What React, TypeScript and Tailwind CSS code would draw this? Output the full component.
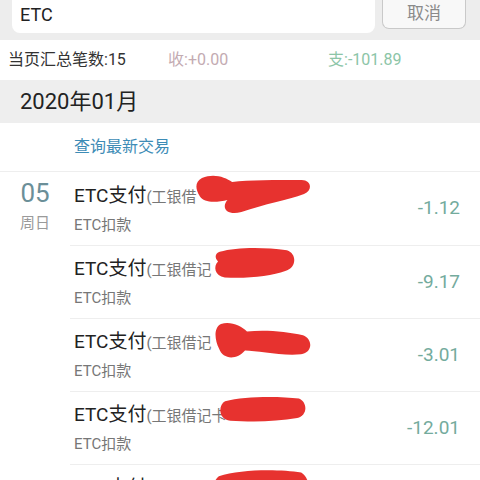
import type { ReactNode } from "react";

const FONT = { fontFamily: '"Roboto", "Noto Sans CJK SC", sans-serif' };

type Txn = { detail: string; amount: string; scribble: ReactNode };

const Scribble = ({ d, className }: { d: string; className: string }) => (
  <svg className={`pointer-events-none absolute ${className}`} viewBox="0 0 100 40" preserveAspectRatio="none">
    <path d={d} fill="#e7322f" />
  </svg>
);

const txns: Txn[] = [
  {
    detail: "(工银借",
    amount: "-1.12",
    scribble: (
      <Scribble
        className="left-[125px] top-[2px] h-[40px] w-[116px]"
        d="M6 4 C16 -1 26 3 32 8 C46 6 70 6 92 6 C100 6 102 16 94 20 C80 26 60 30 40 38 C28 42 22 34 28 26 C20 28 8 30 4 22 C0 14 0 8 6 4 Z"
      />
    ),
  },
  {
    detail: "(工银借记",
    amount: "-9.17",
    scribble: (
      <Scribble
        className="left-[143px] top-[1px] h-[32px] w-[84px]"
        d="M8 6 C28 0 60 0 88 4 C100 8 100 26 86 30 C70 36 40 40 14 38 C2 36 0 24 6 18 C2 14 2 8 8 6 Z"
      />
    ),
  },
  {
    detail: "(工银借记",
    amount: "-3.01",
    scribble: (
      <Scribble
        className="left-[141px] top-[3px] h-[38px] w-[100px]"
        d="M10 2 C20 -1 30 4 36 10 C54 8 76 10 92 14 C102 18 102 32 90 34 C70 36 46 30 34 30 C26 40 12 40 8 28 C4 20 2 6 10 2 Z"
      />
    ),
  },
  {
    detail: "(工银借记卡",
    amount: "-12.01",
    scribble: (
      <Scribble
        className="left-[148px] top-[4px] h-[26px] w-[88px]"
        d="M8 8 C30 0 70 0 92 4 C102 10 102 30 90 34 C66 40 36 40 14 38 C0 36 0 14 8 8 Z"
      />
    ),
  },
  {
    detail: "(工银借",
    amount: "-5.00",
    scribble: (
      <Scribble
        className="left-[141px] top-[4px] h-[36px] w-[98px]"
        d="M8 8 C30 0 70 0 92 4 C102 10 102 30 90 34 C66 40 36 40 14 38 C0 36 0 14 8 8 Z"
      />
    ),
  },
];

export default function App() {
  return (
    <div className="h-[480px] w-[480px] overflow-hidden bg-white" style={FONT}>
      <div className="flex h-[40px] items-start bg-[#ededed]">
        <div className="ml-[12px] flex h-[33px] w-[363px] items-center rounded-b-[8px] bg-white pb-[4px] pl-[8px] text-[18px] text-[#222]">
          ETC
        </div>
        <div className="ml-[7px] flex h-[29px] w-[84px] items-center justify-center rounded-b-[7px] border border-t-0 border-[#c9c9c9] bg-[#f8f8f8] text-[17px] text-[#8a8a8a]">
          取消
        </div>
      </div>

      <div className="flex h-[40px] items-center text-[16px]">
        <span className="w-[160px] pl-[8px] text-[#333]">当页汇总笔数:15</span>
        <span className="w-[160px] pl-[8px] text-[#c3abb2]">收:+0.00</span>
        <span className="pl-[8px] text-[#8cc5a7]">支:-101.89</span>
      </div>

      <div className="flex h-[43px] items-center bg-[#eeeeee] pl-[20px] text-[22px] text-[#222]">2020年01月</div>

      <div className="flex h-[49px] items-center border-b border-[#eeeeee] pl-[74px] text-[16px] text-[#3d8cb6]">
        查询最新交易
      </div>

      <div className="flex">
        <div className="flex w-[70px] flex-col items-center pt-[3px]">
          <span className="text-[26px] leading-[36px] text-[#6b8f98]">05</span>
          <span className="mt-[1px] text-[15px] text-[#9a9a9a]">周日</span>
        </div>
        <div className="flex-1">
          {txns.map((t, i) => (
            <div
              key={i}
              className={`relative flex h-[73px] items-center pr-[20px] ${i > 0 ? "border-t border-[#eeeeee]" : ""}`}
            >
              <div className="flex flex-1 flex-col pl-[4px]">
                <div className="flex items-baseline leading-[26px]">
                  <span className="text-[19px] text-[#222]">ETC支付</span>
                  <span className="text-[15px] text-[#777]">{t.detail}</span>
                </div>
                <span className="mt-[5px] text-[15px] leading-[20px] text-[#777]">ETC扣款</span>
              </div>
              <span className="text-[19px] text-[#74ab9d]">{t.amount}</span>
              {t.scribble}
            </div>
          ))}
        </div>
      </div>
    </div>
  );
}
